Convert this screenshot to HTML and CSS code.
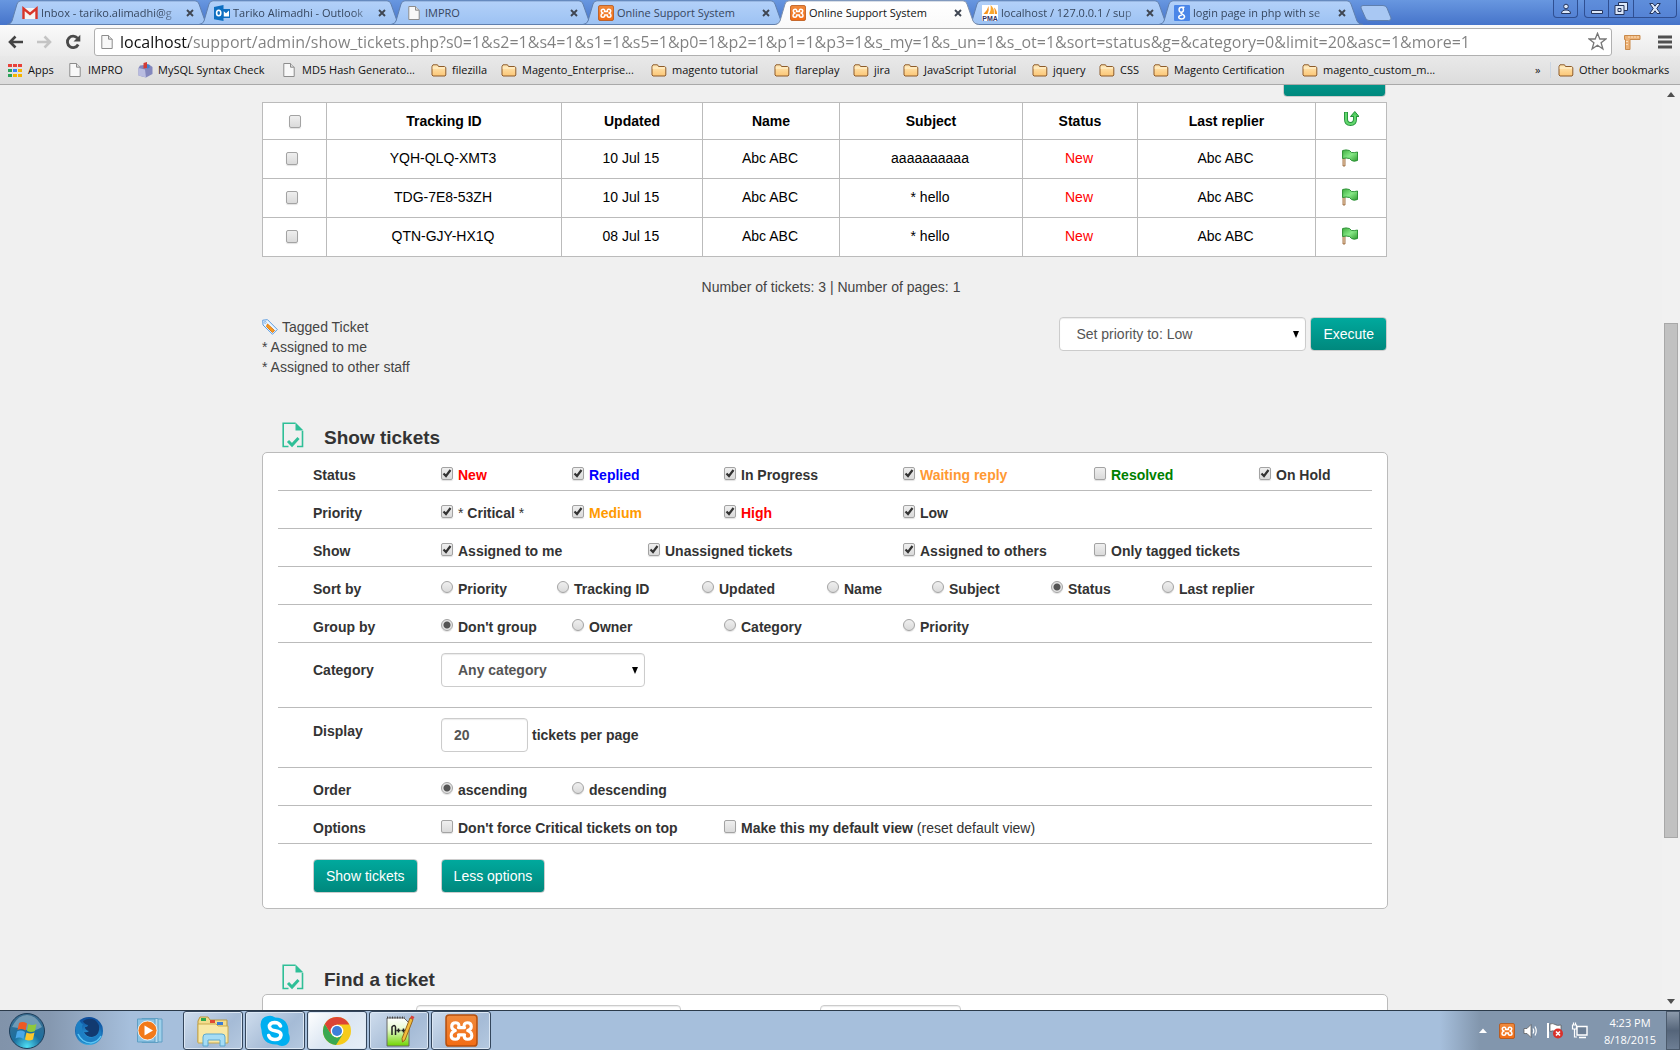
FILE: index.html
```html
<!DOCTYPE html>
<html lang="en">
<head>
<meta charset="utf-8">
<title>Online Support System</title>
<link rel="stylesheet" href="styles.css">
</head>
<body>
<svg class="sprite" aria-hidden="true">
  <defs>
    <linearGradient id="g-tab" x1="0" y1="0" x2="0" y2="1"><stop offset="0" stop-color="#b3d1f9"/><stop offset="1" stop-color="#9dc2f3"/></linearGradient>
    <linearGradient id="g-active" x1="0" y1="0" x2="0" y2="1"><stop offset="0" stop-color="#fff"/><stop offset="1" stop-color="#fafafa"/></linearGradient>
    <linearGradient id="g-folder" x1="0" y1="0" x2="0" y2="1"><stop offset="0" stop-color="#ffe9b8"/><stop offset="1" stop-color="#fbc676"/></linearGradient>
    <linearGradient id="g-flag" x1="0" y1="0" x2="1" y2="1"><stop offset="0" stop-color="#3fae3f"/><stop offset=".5" stop-color="#86e886"/><stop offset="1" stop-color="#2f9a2f"/></linearGradient>
    <radialGradient id="g-orb" cx=".5" cy=".95" r=".9"><stop offset="0" stop-color="#4fe0f5"/><stop offset=".45" stop-color="#1b6f9f"/><stop offset="1" stop-color="#3b6f92"/></radialGradient>
    <radialGradient id="g-fox" cx=".5" cy=".9" r=".9"><stop offset="0" stop-color="#35b3ea"/><stop offset="1" stop-color="#0b4a9a"/></radialGradient>
    <linearGradient id="g-xam" x1="0" y1="0" x2="0" y2="1"><stop offset="0" stop-color="#f08a3c"/><stop offset="1" stop-color="#f36c14"/></linearGradient>
    <linearGradient id="g-note" x1="0" y1="0" x2="0" y2="1"><stop offset="0" stop-color="#fff"/><stop offset=".4" stop-color="#e8fbd0"/><stop offset="1" stop-color="#6fd400"/></linearGradient>
  </defs>
  <symbol id="i-tab" viewBox="0 0 204 25"><path d="M0 24.5Q4 24 5 21L10 4Q11 .8 14 .8H188Q191 .8 192 4L198 21Q199 24 204 24.5Z" fill="url(#g-tab)" stroke="#5f7fae"/></symbol>
  <symbol id="i-tab-on" viewBox="0 0 204 25"><path d="M0 25Q4 24 5 21L10 4Q11 .8 14 .8H188Q191 .8 192 4L198 21Q199 24 204 25Z" fill="url(#g-active)"/><path d="M0 24.5Q4 24 5 21L10 4Q11 .8 14 .8H188Q191 .8 192 4L198 21Q199 24 204 24.5" fill="none" stroke="#7d90ad"/></symbol>
  <symbol id="i-x" viewBox="0 0 8 8"><path d="M1 1L7 7M7 1L1 7" stroke="#3f4652" stroke-width="1.900"/></symbol>
  <symbol id="i-page" viewBox="0 0 16 16"><path d="M2.8 1.5H9.5L13.2 5.2V14.5H2.8Z" fill="#f8f8f8" stroke="#8c8c8c"/><path d="M9.5 1.5V5.2H13.2" fill="#ddd" stroke="#8c8c8c"/></symbol>
  <symbol id="i-folder" viewBox="0 0 16 16"><path d="M1 13V4.500L2 2.800H6.500L7.500 4.500H13.500L14.800 5.500V13L14 14H2Z" fill="url(#g-folder)" stroke="#8d5b2a"/><path d="M1.500 6H14" stroke="#fff3d4"/></symbol>
  <symbol id="i-gmail" viewBox="0 0 16 16"><path d="M1 3H15V14H1Z" fill="#f4f4f4"/><path d="M1.500 14V3.500L8 9L14.500 3.500V14" fill="none" stroke="#d8352a" stroke-width="2.400"/></symbol>
  <symbol id="i-outlook" viewBox="0 0 16 16"><path d="M8 4H16V13H8Z" fill="#0e6fc1"/><path d="M9.500 6L12 8.200L15 5.500V11.500H9.500Z" fill="#fff"/><path d="M0 2L9.500 0V16L0 14.300Z" fill="#0e6fc1"/><ellipse cx="4.700" cy="8" rx="2.100" ry="2.800" fill="none" stroke="#fff" stroke-width="1.600"/></symbol>
  <symbol id="i-xampp" viewBox="0 0 32 32"><rect x="1" y="1" width="30" height="30" rx="3" fill="url(#g-xam)" stroke="#b5500f" stroke-width="1.500"/><path d="M13.500 13Q14 8.500 10.500 8.500Q6.500 8.500 6.500 12Q6.500 15 10 16Q6 17.500 6 21Q6 24.500 10 24.500Q13.500 24.500 13.500 20.500M18.500 13Q18 8.500 21.500 8.500Q25.500 8.500 25.500 12Q25.500 15 22 16Q26 17.500 26 21Q26 24.500 22 24.500Q18.500 24.500 18.500 20.500M13 13.200H19M13 20.200H19" fill="none" stroke="#fff" stroke-width="3" stroke-linejoin="round" stroke-linecap="round"/></symbol>
  <symbol id="i-pma" viewBox="0 0 16 16"><rect width="16" height="16" fill="#fff"/><path d="M6.500 1Q7.500 5 5.500 9H1.500Q5.500 5.500 6.500 1Z" fill="#f7931e"/><path d="M8.500 0Q12.500 3 12 9H7Q9.500 5 8.500 0Z" fill="#f9a72e"/><path d="M12 2.500Q15 5 15 9H12.800Q13 5 12 2.500Z" fill="#f7931e"/><text x="8" y="15.500" text-anchor="middle" class="pma-text">PMA</text></symbol>
  <symbol id="i-google" viewBox="0 0 16 16"><rect width="16" height="16" rx="1" fill="#4a86e8"/><path d="M10.500 2.300H7.500C4.300 2.300 4.300 7.200 7.400 7.200C10.200 7.200 10 2.300 7.500 2.300M7.500 7.200C6 8 7.500 8.800 8.500 9.300C12 11 10.500 14 7.500 14C3.500 14 4 10.300 7.800 10.300" fill="none" stroke="#fff" stroke-width="1.500"/></symbol>
  <symbol id="i-apps" viewBox="0 0 14 14"><path d="M0 1h4v3H0z M5 1h4v3H5z M10 1h4v3h-4z" fill="#e8413a"/><path d="M0 6h4v3H0z" fill="#2ca25a"/><path d="M5 6h4v3H5z" fill="#3b82f6"/><path d="M10 6h4v3h-4z" fill="#f5b400"/><path d="M0 11h4v3H0z" fill="#2ca25a"/><path d="M5 11h4v3H5z M10 11h4v3h-4z" fill="#f5b400"/></symbol>
  <symbol id="i-mysql" viewBox="0 0 16 16"><path d="M3 3.500L12 2.500L15.500 5V12L9 15.500L1.500 13.500V6Z" fill="#8387bd"/><path d="M1.500 6L8 7.500L9 15.500L1.500 13.500Z" fill="#b9bce0"/><path d="M6.500 1L10 0V6L6.500 6.500Z" fill="#d33b35"/><path d="M10 2L12.500 3V6L10 6.500Z" fill="#3f7fd0"/></symbol>
  <symbol id="i-flag" viewBox="0 0 16 18"><path d="M1 2V17H3V9" fill="#f3dcc0" stroke="#8d5524" stroke-width=".8"/><path d="M.6 1.500Q4 .3 7.500 1.500L9.500 3.500Q12 4 15.500 3V11.500Q12 13 9.500 11.500L7.500 9.500Q4 8.500 .6 9.500Z" fill="url(#g-flag)" stroke="#1f8a2a" stroke-width=".9"/></symbol>
  <symbol id="i-sort" viewBox="0 0 16 16"><path d="M3 1V8Q3 13 7.500 13Q12 13 12 8V4" fill="none" stroke="#23913a" stroke-width="4"/><path d="M7.500 5.500L11.800 .5L16 5.500Z" fill="#4fcb5d" stroke="#23913a"/><path d="M3 1.500V8Q3 13 7.500 13Q12 13 12 8V4" fill="none" stroke="#63d66d" stroke-width="2.200"/></symbol>
  <symbol id="i-tag" viewBox="0 0 16 16"><path d="M.7 1.200L5.500 .7L15.300 10.500L10.500 15.300L1 6Z" fill="#eaf5ff" stroke="#5b9be0"/><path d="M5.500 5L12.500 11.500L10.500 13.500L4.500 7.500Z" fill="#f59a23" stroke="#e07b12"/><circle cx="3.200" cy="3.400" r="1" fill="#fff" stroke="#5b9be0" stroke-width=".7"/></symbol>
  <symbol id="i-doc" viewBox="0 0 22 26"><path d="M6.500 24.500H1.200V1.200H13.500M20.500 9V24.500H15" fill="none" stroke="#2fbf97" stroke-width="1.600"/><path d="M13.500 .5L21.500 8.500H13.500Z" fill="#2fbf97"/><path d="M6 19L10 23L16.500 16" fill="none" stroke="#2fbf97" stroke-width="3"/></symbol>
</svg>

<header class="browser">
  <div class="titlebar">
    <nav class="tabs" aria-label="Tabs">
      <div class="tab"><svg class="tab-shape"><use href="#i-tab"/></svg><svg class="fav"><use href="#i-gmail"/></svg><a class="tab-title tab-fade" href="#">Inbox - tariko.alimadhi@g</a><button class="tab-x" aria-label="Close"><svg width="8" height="8"><use href="#i-x"/></svg></button></div>
      <div class="tab"><svg class="tab-shape"><use href="#i-tab"/></svg><svg class="fav"><use href="#i-outlook"/></svg><a class="tab-title tab-fade" href="#">Tariko Alimadhi - Outlook</a><button class="tab-x" aria-label="Close"><svg width="8" height="8"><use href="#i-x"/></svg></button></div>
      <div class="tab"><svg class="tab-shape"><use href="#i-tab"/></svg><svg class="fav"><use href="#i-page"/></svg><a class="tab-title" href="#">IMPRO</a><button class="tab-x" aria-label="Close"><svg width="8" height="8"><use href="#i-x"/></svg></button></div>
      <div class="tab"><svg class="tab-shape"><use href="#i-tab"/></svg><svg class="fav"><use href="#i-xampp"/></svg><a class="tab-title" href="#">Online Support System</a><button class="tab-x" aria-label="Close"><svg width="8" height="8"><use href="#i-x"/></svg></button></div>
      <div class="tab tab-on"><svg class="tab-shape"><use href="#i-tab-on"/></svg><svg class="fav"><use href="#i-xampp"/></svg><a class="tab-title" href="#">Online Support System</a><button class="tab-x" aria-label="Close"><svg width="8" height="8"><use href="#i-x"/></svg></button></div>
      <div class="tab"><svg class="tab-shape"><use href="#i-tab"/></svg><svg class="fav"><use href="#i-pma"/></svg><a class="tab-title tab-fade" href="#">localhost / 127.0.0.1 / sup</a><button class="tab-x" aria-label="Close"><svg width="8" height="8"><use href="#i-x"/></svg></button></div>
      <div class="tab"><svg class="tab-shape"><use href="#i-tab"/></svg><svg class="fav"><use href="#i-google"/></svg><a class="tab-title tab-fade" href="#">login page in php with se</a><button class="tab-x" aria-label="Close"><svg width="8" height="8"><use href="#i-x"/></svg></button></div>
      <button class="new-tab" aria-label="New tab"><svg width="32" height="17" viewBox="0 0 32 17"><path d="M3 .5H23Q26 .5 27 3L31 13Q31.500 15.500 28.500 15.500H9Q6.500 15.500 5.500 13L1 3Q.3 .5 3 .5Z" fill="#a9c8f3" stroke="#5f7fae"/></svg></button>
    </nav>
    <div class="window-buttons">
      <button class="wb wb-user" aria-label="User"><svg width="12" height="12" viewBox="0 0 12 12"><circle cx="6" cy="3.500" r="2.300"/><path d="M1.500 10.500Q1.500 7 6 7T10.500 10.500Z"/></svg></button>
      <button class="wb wb-min" aria-label="Minimize"><svg width="12" height="12" viewBox="0 0 12 12"><path d="M.5 7.500H11.500V10.500H.5Z"/></svg></button>
      <button class="wb wb-max" aria-label="Restore"><svg width="14" height="13" viewBox="0 0 14 13"><path d="M4.500 .5H13.500V8.500H4.500Z"/><path d="M1 3.500H10V12.500H1Z"/><path d="M4 6.500H7V9.500H4Z"/></svg></button>
      <button class="wb wb-close" aria-label="Close window"><svg width="12" height="11" viewBox="0 0 12 11"><path d="M.7 .5H4L6 3.200L8 .5H11.300L7.800 5.500L11.300 10.500H8L6 7.800L4 10.500H.7L4.200 5.500Z"/></svg></button>
    </div>
  </div>
  <div class="navbar">
    <button class="nav-btn" aria-label="Back"><svg width="18" height="16" viewBox="0 0 18 16"><path d="M16 8H3M8.500 2.500L3 8L8.500 13.500" fill="none" stroke="#444" stroke-width="2.600"/></svg></button>
    <button class="nav-btn" aria-label="Forward"><svg width="18" height="16" viewBox="0 0 18 16"><path d="M1 8H14M8.500 2.500L14 8L8.500 13.500" fill="none" stroke="#c4c4c4" stroke-width="2.600"/></svg></button>
    <button class="nav-btn" aria-label="Reload"><svg width="18" height="16" viewBox="0 0 18 16"><path d="M12.500 4.200A5.700 5.700 0 1 0 13.200 10.500" fill="none" stroke="#4a4a4a" stroke-width="2.800"/><path d="M8.500 7.500H15.300V.8Z" fill="#4a4a4a"/></svg></button>
    <div class="omnibox">
      <svg class="fav"><use href="#i-page"/></svg>
      <input class="url" type="text" aria-label="Address" value="localhost/support/admin/show_tickets.php?s0=1&amp;s2=1&amp;s4=1&amp;s1=1&amp;s5=1&amp;p0=1&amp;p2=1&amp;p1=1&amp;p3=1&amp;s_my=1&amp;s_un=1&amp;s_ot=1&amp;sort=status&amp;g=&amp;category=0&amp;limit=20&amp;asc=1&amp;more=1">
      <svg width="19" height="19" viewBox="0 0 19 19"><path d="M9.500 1.300L11.800 7H17.900L13.100 10.800L14.900 17L9.500 13.300L4.100 17L5.900 10.800L1.100 7H7.200Z" fill="#fdfdfd" stroke="#777" stroke-width="1.300"/></svg>
    </div>
    <div class="nav-tools">
      <button class="nav-btn" aria-label="Page ruler"><svg width="18" height="18" viewBox="0 0 18 18"><path d="M1.500 2.500H17V6.500H7V16.500H2.500V6.500H1.500Z" fill="#edb277" stroke="#c98a4b"/><path d="M6 3V5M9 3V5M12 3V5M15 3V5M3 8.500H5M3 11.500H5" stroke="#fbe0bd"/></svg></button>
      <button class="nav-btn" aria-label="Menu"><svg width="14" height="14" viewBox="0 0 14 14"><path d="M0 2H14M0 7H14M0 12H14" stroke="#505050" stroke-width="3"/></svg></button>
    </div>
  </div>
  <nav class="bookmarks" aria-label="Bookmarks">
    <a href="#"><svg class="apps"><use href="#i-apps"/></svg>Apps</a>
    <a href="#" class="paged"><svg class="fav"><use href="#i-page"/></svg>IMPRO</a>
    <a href="#"><svg class="fav"><use href="#i-mysql"/></svg>MySQL Syntax Check</a>
    <a href="#" class="paged"><svg class="fav"><use href="#i-page"/></svg>MD5 Hash Generato...</a>
    <a href="#"><svg class="fav"><use href="#i-folder"/></svg>filezilla</a>
    <a href="#"><svg class="fav"><use href="#i-folder"/></svg>Magento_Enterprise...</a>
    <a href="#"><svg class="fav"><use href="#i-folder"/></svg>magento tutorial</a>
    <a href="#"><svg class="fav"><use href="#i-folder"/></svg>flareplay</a>
    <a href="#"><svg class="fav"><use href="#i-folder"/></svg>jira</a>
    <a href="#"><svg class="fav"><use href="#i-folder"/></svg>JavaScript Tutorial</a>
    <a href="#"><svg class="fav"><use href="#i-folder"/></svg>jquery</a>
    <a href="#"><svg class="fav"><use href="#i-folder"/></svg>CSS</a>
    <a href="#"><svg class="fav"><use href="#i-folder"/></svg>Magento Certification</a>
    <a href="#"><svg class="fav"><use href="#i-folder"/></svg>magento_custom_m...</a>
    <a href="#" class="more">»</a>
    <a href="#" class="other"><svg class="fav"><use href="#i-folder"/></svg>Other bookmarks</a>
  </nav>
</header>

<div class="viewport">
  <main class="content">
    <div class="top-action"><button class="btn" aria-label="New ticket"></button></div>
    <div class="results">
      <table class="tickets">
        <colgroup><col class="c-check"><col class="c-id"><col class="c-date"><col class="c-name"><col class="c-subject"><col class="c-status"><col class="c-replier"><col class="c-flag"></colgroup>
        <thead>
          <tr><th><input type="checkbox" aria-label="Select all"></th><th>Tracking ID</th><th>Updated</th><th>Name</th><th>Subject</th><th>Status</th><th>Last replier</th><th><svg class="mark mark-sort"><use href="#i-sort"/></svg></th></tr>
        </thead>
        <tbody>
          <tr><td class="check"><input type="checkbox" aria-label="Select YQH-QLQ-XMT3"></td><td>YQH-QLQ-XMT3</td><td>10 Jul 15</td><td>Abc ABC</td><td>aaaaaaaaaa</td><td class="red">New</td><td>Abc ABC</td><td><svg class="mark"><use href="#i-flag"/></svg></td></tr>
          <tr><td class="check"><input type="checkbox" aria-label="Select TDG-7E8-53ZH"></td><td>TDG-7E8-53ZH</td><td>10 Jul 15</td><td>Abc ABC</td><td>* hello</td><td class="red">New</td><td>Abc ABC</td><td><svg class="mark"><use href="#i-flag"/></svg></td></tr>
          <tr><td class="check"><input type="checkbox" aria-label="Select QTN-GJY-HX1Q"></td><td>QTN-GJY-HX1Q</td><td>08 Jul 15</td><td>Abc ABC</td><td>* hello</td><td class="red">New</td><td>Abc ABC</td><td><svg class="mark"><use href="#i-flag"/></svg></td></tr>
        </tbody>
      </table>
      <p class="count">Number of tickets: 3 | Number of pages: 1</p>
      <div class="bulk">
        <div class="legend">
          <div class="legend-tag"><svg class="fav"><use href="#i-tag"/></svg>Tagged Ticket</div>
          <div>* Assigned to me</div>
          <div>* Assigned to other staff</div>
        </div>
        <form class="bulk-form">
          <select class="field bulk-select" aria-label="Action"><option>Set priority to: Low</option></select>
          <button type="button" class="btn">Execute</button>
        </form>
      </div>
    </div>

    <h2 class="heading"><svg class="doc"><use href="#i-doc"/></svg>Show tickets</h2>
    <form class="panel">
      <div class="row">
        <span>Status</span>
        <label class="red"><input type="checkbox" checked>New</label>
        <label class="blue"><input type="checkbox" checked>Replied</label>
        <label><input type="checkbox" checked>In Progress</label>
        <label class="amber"><input type="checkbox" checked>Waiting reply</label>
        <label class="green"><input type="checkbox">Resolved</label>
        <label><input type="checkbox" checked>On Hold</label>
      </div>
      <div class="row">
        <span>Priority</span>
        <label><input type="checkbox" checked><span><span class="plain">*</span> Critical <span class="plain">*</span></span></label>
        <label class="orange"><input type="checkbox" checked>Medium</label>
        <label class="red"><input type="checkbox" checked>High</label>
        <label><input type="checkbox" checked>Low</label>
      </div>
      <div class="row row-show">
        <span>Show</span>
        <label><input type="checkbox" checked>Assigned to me</label>
        <label><input type="checkbox" checked>Unassigned tickets</label>
        <label><input type="checkbox" checked>Assigned to others</label>
        <label><input type="checkbox">Only tagged tickets</label>
      </div>
      <div class="row row-sort">
        <span>Sort by</span>
        <label><input type="radio" name="sort">Priority</label>
        <label><input type="radio" name="sort">Tracking ID</label>
        <label><input type="radio" name="sort">Updated</label>
        <label><input type="radio" name="sort">Name</label>
        <label><input type="radio" name="sort">Subject</label>
        <label><input type="radio" name="sort" checked>Status</label>
        <label><input type="radio" name="sort">Last replier</label>
      </div>
      <div class="row">
        <span>Group by</span>
        <label><input type="radio" name="group" checked>Don't group</label>
        <label><input type="radio" name="group">Owner</label>
        <label><input type="radio" name="group">Category</label>
        <label><input type="radio" name="group">Priority</label>
      </div>
      <div class="row row-category">
        <label class="row-label" for="category">Category</label>
        <select class="field category" id="category"><option>Any category</option></select>
      </div>
      <div class="row row-display">
        <label class="row-label" for="limit">Display</label>
        <div class="limit"><input class="field" id="limit" type="text" value="20"><span>tickets per page</span></div>
      </div>
      <div class="row">
        <span>Order</span>
        <label><input type="radio" name="order" checked>ascending</label>
        <label><input type="radio" name="order">descending</label>
      </div>
      <div class="row row-options">
        <span>Options</span>
        <label><input type="checkbox">Don't force Critical tickets on top</label>
        <label><input type="checkbox"><span>Make this my default view <a class="plain" href="#">(reset default view)</a></span></label>
      </div>
      <div class="actions">
        <button type="button" class="btn">Show tickets</button>
        <button type="button" class="btn">Less options</button>
      </div>
    </form>

    <h2 class="heading heading-find"><svg class="doc"><use href="#i-doc"/></svg>Find a ticket</h2>
    <form class="panel find">
      <input class="field" type="text" aria-label="Search for">
      <input class="field" type="text" aria-label="Search in">
    </form>
  </main>
  <div class="scrollbar">
    <svg width="8" height="5" viewBox="0 0 8 5"><path d="M0 5L4 0L8 5Z" fill="#505050"/></svg>
    <div class="track"><div class="thumb"></div></div>
    <svg width="8" height="5" viewBox="0 0 8 5"><path d="M0 0L4 5L8 0Z" fill="#505050"/></svg>
  </div>
</div>

<footer class="taskbar">
  <button class="launch orb" aria-label="Start"><svg width="38" height="38" viewBox="0 0 38 38"><circle cx="19" cy="19" r="17.500" fill="url(#g-orb)" stroke="#1d3d5a"/><path d="M4 15Q10 3 19 3T34 15Q26 20 19 18T4 15Z" fill="#fff" opacity=".3"/><path d="M11 11Q15 9 19 11.500L17.500 18.500Q13.500 16 9.500 18Z" fill="#ee5a24"/><path d="M20.300 12Q24 14 28.500 12L27 19Q23 21 19 19Z" fill="#8fc83c"/><path d="M9 19.500Q13 17.500 17 20L15.500 27Q11.500 24.500 7.500 26.500Z" fill="#4aa8e8"/><path d="M18.500 20.500Q22.500 22.500 26.500 20.500L25 27.500Q21 29.500 17 27.500Z" fill="#fcc72c"/></svg></button>
  <button class="launch" aria-label="Firefox"><svg width="30" height="30" viewBox="0 0 30 30"><circle cx="15" cy="15" r="14" fill="url(#g-fox)"/><path d="M9 5Q15 1 21 4Q26 8 25 14Q24 20 18 21Q12 21 10 16Q13 17 15 15Q11 14 11 11Q14 11 14 9Q10 8 9 5Z" fill="#123a70"/><path d="M2 10Q3 6 6 4Q6 7 9 8Q7 11 9 16Q12 23 20 21Q25 19 26 13Q29 21 22 26Q12 31 5 23Q1 18 2 10Z" fill="#1d7fc4"/><path d="M4 18Q8 27 17 27Q24 26 27 20" fill="none" stroke="#5cc4f2" stroke-width="1.500"/></svg></button>
  <button class="launch" aria-label="Media player"><svg width="30" height="28" viewBox="0 0 30 28"><path d="M10 2H26V25H10Z" fill="#9fd0ea" stroke="#5f9fc4"/><path d="M6 1.500H22V25.500H6Z" fill="#b8dcf0" stroke="#5f9fc4"/><path d="M1.500 2H19V25H1.500Z" fill="#8cc3e4" stroke="#5f9fc4"/><circle cx="11.500" cy="13.500" r="9.500" fill="#f27a1a" stroke="#fff" stroke-width=".8"/><path d="M8.500 8.500V18.500L17 13.500Z" fill="#fff"/></svg></button>
  <div class="running">
    <button class="app" aria-label="Explorer"><svg width="34" height="32" viewBox="0 0 34 32"><path d="M2 6L4 2H12L14 5H31V27H2Z" fill="#f3dc8c" stroke="#b9973d"/><path d="M5 3H10V6H5Z" fill="#2fa84f"/><path d="M14 5H19V8H14Z" fill="#e24a32"/><path d="M21 7H27V10H21Z" fill="#3a7bd5"/><path d="M2 9H20L22 11H32V28H2Z" fill="#f8e8a6" stroke="#c9a94e"/><path d="M7 31V22Q7 19 10 19H26Q29 19 29 22V31H24V25H12V31Z" fill="#a5dcf5" stroke="#5aa7cf"/></svg></button>
    <button class="app" aria-label="Skype"><svg width="32" height="32" viewBox="0 0 32 32"><path d="M9 1Q13 0 16 2.500Q30 3 29.500 18Q33 26 27 30Q22 32 18 29.500Q3 30 2.500 15Q-1 3 9 1Z" fill="#00aff0"/><path d="M21.500 11Q20 7.500 15.500 7.500Q10 8 10.500 12Q11 15 16 15.700Q22 16.500 22 20Q21.500 24.500 16 24.500Q11 24.500 9.700 20.500" fill="none" stroke="#fff" stroke-width="3.600" stroke-linecap="round"/></svg></button>
    <button class="app app-on" aria-label="Chrome"><svg width="30" height="30" viewBox="0 0 30 30"><circle cx="15" cy="15" r="14" fill="#f6cb1b"/><path d="M15 22L9 18L2.800 8A14 14 0 0 0 14 29L21 18Z" fill="#39a852"/><path d="M2.800 8A14 14 0 0 1 27.300 8.500H15L9 18Z" fill="#dd4435"/><circle cx="15" cy="15" r="6.300" fill="#fff"/><circle cx="15" cy="15" r="5" fill="#3e7fd8"/></svg></button>
    <button class="app" aria-label="Notepad++"><svg width="32" height="32" viewBox="0 0 32 32"><path d="M4 3H21L26 8V31H4Z" fill="url(#g-note)" stroke="#666"/><path d="M4 2.500H22" stroke="#444" stroke-width="2" stroke-dasharray="1 1.500"/><path d="M9 20V12Q11.500 9 12.500 12V20M13.500 15.500H17.500M15.500 13.500V17.500M18.500 15.500H22.500M20.500 13.500V17.500" fill="none" stroke="#222" stroke-width="1.500"/><path d="M27 3L30 4.500L22 25L19.500 27L19 23.500Z" fill="#f2bd3c" stroke="#99651a"/><path d="M27 3L28.500 .5L31.500 2L30 4.500Z" fill="#d9413a"/></svg></button>
    <button class="app" aria-label="XAMPP"><svg width="33" height="33" viewBox="0 0 32 32"><use href="#i-xampp"/></svg></button>
  </div>
  <div class="tray">
    <svg width="8" height="5" viewBox="0 0 8 5"><path d="M0 5L4 .5L8 5Z" fill="#fff"/></svg>
    <svg class="fav"><use href="#i-xampp"/></svg>
    <svg width="15" height="16" viewBox="0 0 15 16"><path d="M1 5.500H4L8 1.500V14.500L4 10.500H1Z" fill="#fff" stroke="#555" stroke-width=".7"/><path d="M10 5.500Q11.500 8 10 10.500M12 3.500Q14.500 8 12 12.500" fill="none" stroke="#fff" stroke-width="1.200"/></svg>
    <svg width="17" height="17" viewBox="0 0 17 17"><path d="M2 1V16" stroke="#fff" stroke-width="2"/><path d="M4 2Q7 1 9 2.500T15 3V10Q12 11 9.500 9.500T4 9.500Z" fill="#fff" stroke="#555" stroke-width=".7"/><circle cx="12" cy="11.500" r="5" fill="#d9302a"/><path d="M10 9.500L14 13.500M14 9.500L10 13.500" stroke="#fff" stroke-width="1.600"/></svg>
    <svg width="17" height="17" viewBox="0 0 17 17"><path d="M6 4.500H16V13H6Z" fill="#6d7f95" stroke="#fff" stroke-width="1.400"/><path d="M8 15.500H15" stroke="#fff" stroke-width="1.500"/><path d="M1.500 3H5.500V7H1.500ZM2.500 .5V3M4.500 .5V3M3.500 7V15H6" fill="none" stroke="#fff" stroke-width="1.200"/></svg>
  </div>
  <div class="clock"><span>4:23 PM</span><span>8/18/2015</span></div>
  <button class="show-desktop" aria-label="Show desktop"></button>
</footer>
</body>
</html>
```

FILE: styles.css
```css
* { box-sizing: border-box; }

body {
  margin: 0;
  height: 100vh;
  display: flex;
  flex-direction: column;
  overflow: hidden;
  background: #f0f0f0;
  color: #333;
  font: 14px/20px "Liberation Sans", Arial, sans-serif;
}

button { margin: 0; padding: 0; border: 0; background: none; font: inherit; color: inherit; }
a { color: inherit; text-decoration: none; }
svg { display: block; flex: none; }
.sprite { position: absolute; width: 0; height: 0; }
.fav { width: 16px; height: 16px; }
.pma-text { font: bold 7px "Liberation Sans", Arial, sans-serif; fill: #333366; }

/* Browser frame */
.browser { flex: none; font: 11px/16px "Open Sans", "Segoe UI", sans-serif; color: #111; }
.titlebar {
  display: flex;
  justify-content: space-between;
  height: 25px;
  background: linear-gradient(#6897e0, #4674ca);
}
.tabs { display: flex; padding-left: 7px; }
.tab {
  position: relative;
  display: flex;
  align-items: center;
  gap: 3px;
  width: 204px;
  height: 25px;
  margin-right: -12px;
  padding: 1px 17px 0 15px;
  color: #36465e;
}
.tab-on { z-index: 1; color: #111; }
.tab-shape { position: absolute; left: 0; top: 0; width: 204px; height: 25px; }
.tab .fav, .tab-title, .tab-x { position: relative; }
.tab-title { flex: 1; white-space: nowrap; }
.tab-fade { mask-image: linear-gradient(to right, #000 84%, transparent); }
.tab-x { width: 8px; }
.new-tab { margin: 5px 0 0 9px; align-self: flex-start; }
.window-buttons { display: flex; padding-right: 3px; }
.wb {
  display: flex;
  align-items: center;
  justify-content: center;
  width: 25px;
  height: 18px;
  border: 1px solid #2f4f92;
  border-top: 0;
  border-left: 0;
  background: linear-gradient(#5f8edb, #5583d5);
}
.wb svg { fill: #dce8fa; stroke: #25355c; stroke-width: 1; }
.wb-user { border-left: 1px solid #2f4f92; border-radius: 0 0 4px 4px; margin-right: 6px; }
.wb-min { border-left: 1px solid #2f4f92; border-radius: 0 0 0 4px; }
.wb-close { width: 43px; border-radius: 0 0 4px 0; }

.navbar {
  display: flex;
  align-items: center;
  gap: 11px;
  height: 31px;
  padding: 2px 8px 0 7px;
  background: linear-gradient(#fafafa, #ebebeb);
}
.nav-btn { flex: none; }
.nav-tools { display: flex; align-items: center; gap: 17px; }
.omnibox {
  flex: 1;
  display: flex;
  align-items: center;
  gap: 5px;
  height: 28px;
  padding: 0 4px;
  border: 1px solid #b0b0b0;
  border-radius: 3px;
  background: #fff;
}
.url {
  flex: 1;
  min-width: 0;
  padding: 0;
  border: 0;
  outline: 0;
  font: 16px/22px "Open Sans", "Segoe UI", sans-serif;
  color: transparent;
  background: linear-gradient(to right, #111 69px, #808080 69px);
  background-clip: text;
  -webkit-background-clip: text;
}
.bookmarks {
  display: grid;
  grid-template-columns: 62px 67px 147px 147px 70px 150px 123px 79px 50px 129px 67px 54px 149px 1fr 15px 129px;
  align-items: center;
  height: 29px;
  padding: 0 1px 0 8px;
  border-bottom: 1px solid #a9a9a9;
  background: linear-gradient(#e9e9e9, #dcdcdc);
}
.bookmarks a { display: flex; align-items: center; gap: 5px; white-space: nowrap; }
.bookmarks .paged .fav { margin-left: -3px; }
.bookmarks .apps { width: 14px; height: 14px; margin-right: 1px; }
.bookmarks .other { border-left: 1px solid #ccd6e2; padding-left: 7px; }

/* Page */
.viewport { flex: 1; min-height: 0; display: flex; overflow: hidden; background: #f0f0f0; }
.content { flex: 1; max-width: 1170px; margin: 0 auto; padding: 0 28px 0 16px; }
.scrollbar {
  flex: none;
  width: 18px;
  display: flex;
  flex-direction: column;
  align-items: center;
  padding: 7px 0 6px;
  background: #f1f1f1;
}
.track { flex: 1; width: 14px; display: flex; flex-direction: column; }
.track::before { content: ""; flex: 225; }
.thumb { flex: 512; background: #c1c1c1; border: 1px solid #a8a8a8; }
.track::after { content: ""; flex: 161; }

.btn {
  height: 34px;
  padding: 0 12px;
  border: 1px solid #ccc;
  border-radius: 4px;
  background: linear-gradient(#00a99d, #00887d);
  color: #fff;
}
.top-action { display: flex; justify-content: flex-end; padding-right: 2px; margin: -22px 0 5px; }
.top-action .btn { width: 103px; }

.results { margin-right: 1px; color: #444; }
.tickets { width: 100%; border-collapse: collapse; table-layout: fixed; background: #fff; color: #000; }
.tickets th, .tickets td { height: 39px; padding: 0; border: 1px solid #bbb; text-align: center; }
.tickets th { height: 37px; }
.tickets td { padding: 0 2px 2px 0; }
.tickets td.check { padding-right: 6px; }
.tickets .mark { margin: 0 auto; width: 16px; height: 18px; }
.tickets .mark-sort { height: 16px; margin-bottom: 4px; }
.c-check { width: 64px; }
.c-id { width: 235px; }
.c-date { width: 141px; }
.c-name { width: 137px; }
.c-subject { width: 183px; }
.c-status { width: 115px; }
.c-replier { width: 178px; }

.red, .tickets .red { color: #f00; }
.blue { color: #00f; }
.amber { color: #f93; }
.orange { color: #ff9a00; }
.green { color: #008000; }
.plain { font-weight: normal; }

.count { margin: 20px 0; padding-left: 13px; text-align: center; }
.bulk { display: flex; justify-content: space-between; align-items: flex-start; }
.legend-tag { display: flex; align-items: center; gap: 4px; }
.bulk-form { display: flex; gap: 4px; }

.field {
  height: 34px;
  padding: 0 12px;
  border: 1px solid #ccc;
  border-radius: 4px;
  outline: 0;
  background: #fff;
  box-shadow: inset 0 1px 1px rgba(0, 0, 0, .08);
  color: #555;
  font: inherit;
}
select.field {
  appearance: none;
  padding: 0 16px;
  background: #fff url("data:image/svg+xml,%3Csvg xmlns='http://www.w3.org/2000/svg' width='6' height='7'%3E%3Cpath d='M0 0H6L3 7Z'/%3E%3C/svg%3E") no-repeat right 6px center;
}
.bulk-select { width: 247px; }

input[type="checkbox"], input[type="radio"] {
  appearance: none;
  flex: none;
  width: 12px;
  height: 13px;
  margin: 0;
  border: 1px solid #a3a3a3;
  border-radius: 2px;
  background: linear-gradient(#efefef, #dadada);
  box-shadow: 0 1px 1px rgba(0, 0, 0, .12);
}
input[type="radio"] { height: 12px; border-radius: 50%; }
input[type="checkbox"]:checked {
  background: url("data:image/svg+xml,%3Csvg xmlns='http://www.w3.org/2000/svg' width='10' height='11'%3E%3Cpath d='M1.500 5.500L4 8L8.500 2' fill='none' stroke='%23333' stroke-width='2.200'/%3E%3C/svg%3E") no-repeat center, linear-gradient(#efefef, #dadada);
}
input[type="radio"]:checked { background: radial-gradient(circle, #555 3px, #e4e4e4 4px); }
.tickets input[type="checkbox"] { display: block; margin: 0 auto; }

.heading {
  display: flex;
  align-items: center;
  gap: 20px;
  height: 32px;
  margin: 43px 0 0;
  padding: 4px 0 0 20px;
  font-size: 19px;
  line-height: 24px;
}
.heading-find { margin-top: 53px; }
.doc { width: 22px; height: 26px; margin-bottom: 6px; }

.panel { border: 1px solid #bbb; border-radius: 5px; padding: 0 15px; background: #fff; font-weight: bold; }
.row {
  display: grid;
  grid-template-columns: 128px 131px 152px 179px 191px 165px 1fr;
  align-items: start;
  padding: 12px 0 5px 35px;
  border-bottom: 1px solid #bbb;
}
.row label { display: flex; gap: 5px; white-space: nowrap; }
.row label input { margin-top: 2px; }
.row-show { grid-template-columns: 128px 207px 255px 191px 1fr; }
.row-sort { grid-template-columns: 128px 116px 145px 125px 105px 119px 111px 1fr; }
.row-options { grid-template-columns: 128px 283px 1fr; }
.row-category { grid-template-columns: 128px 204px; padding: 10px 0 20px 35px; }
.row-category .row-label { padding-top: 7px; }
.row-display { grid-template-columns: 128px 1fr; padding: 10px 0 15px 35px; }
.row-display .row-label { padding-top: 3px; }
.limit { display: flex; align-items: center; gap: 4px; }
.limit .field { width: 87px; }
.actions { display: flex; gap: 23px; padding: 15px 0 15px 35px; }
.actions .btn { font-weight: normal; }
.find { display: grid; grid-template-columns: 265px 141px; gap: 139px; padding: 10px 0 30px 153px; }

/* Taskbar */
.taskbar {
  flex: none;
  display: flex;
  align-items: center;
  height: 40px;
  border-top: 1px solid #2b3a4a;
  background: linear-gradient(to right, #8193aa 0, #8598b0 50px, #a6bfdc 130px, #a6bfdc calc(100% - 240px), #8296ad calc(100% - 200px), #8296ad);
}
.launch { display: flex; align-items: center; justify-content: center; width: 62px; height: 39px; }
.orb { width: 54px; margin-right: 4px; }
.running { display: flex; gap: 2px; margin-left: 1px; }
.app {
  display: flex;
  align-items: center;
  justify-content: center;
  width: 60px;
  height: 39px;
  border: 1px solid #34465c;
  border-radius: 3px;
  box-shadow: inset 0 0 0 1px #dbe7f4;
  background: linear-gradient(135deg, #cfdded, #a5bbd6 60%, #b5c9e0);
}
.app-on { background: linear-gradient(135deg, #fff, #dbe6f2 50%, #e6eef7); }
.tray { display: flex; align-items: center; gap: 8px; margin-left: auto; padding-right: 6px; height: 100%; }
.tray svg:first-child { margin-right: 4px; }
.clock {
  display: flex;
  flex-direction: column;
  align-items: center;
  width: 72px;
  color: #fff;
  font: 11px/17px "Open Sans", "Segoe UI", sans-serif;
}
.show-desktop { width: 14px; height: 39px; border: 1px solid #4b5a6c; background: linear-gradient(#8c9aab, #55657a 50%, #6d7e94); }
```
